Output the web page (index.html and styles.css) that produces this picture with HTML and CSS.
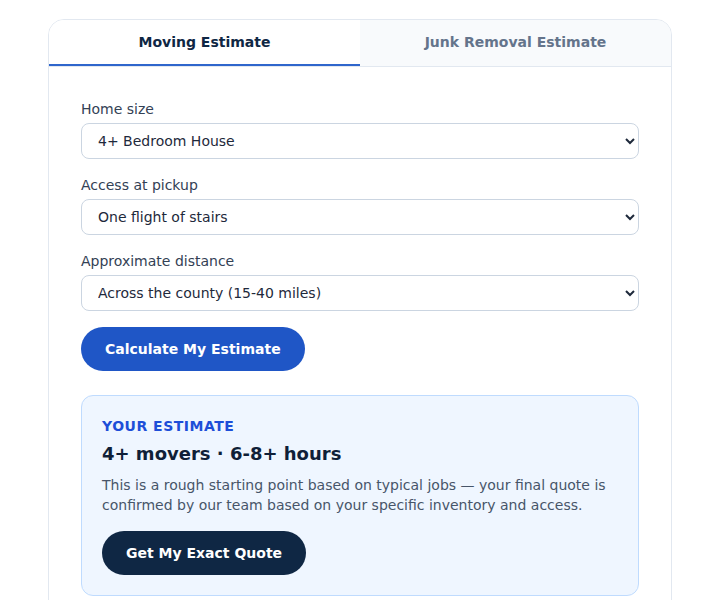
FILE: index.html
```html
<!DOCTYPE html>
<html lang="en">
<head>
<meta charset="utf-8">
<title>Estimate</title>
<link rel="stylesheet" href="styles.css">
</head>
<body>
<div class="card">
  <div class="tabs">
    <div class="tab active">Moving Estimate</div>
    <div class="tab">Junk Removal Estimate</div>
  </div>
  <div class="body">
    <div class="field">
      <label class="label">Home size</label>
      <select class="select"><option>4+ Bedroom House</option></select>
    </div>
    <div class="field">
      <label class="label">Access at pickup</label>
      <select class="select"><option>One flight of stairs</option></select>
    </div>
    <div class="field">
      <label class="label">Approximate distance</label>
      <select class="select"><option>Across the county (15-40 miles)</option></select>
    </div>
    <button class="btn btn-primary">Calculate My Estimate</button>
    <div class="result">
      <div class="eyebrow">YOUR ESTIMATE</div>
      <div class="headline">4+ movers · 6-8+ hours</div>
      <p class="note">This is a rough starting point based on typical jobs — your final quote is confirmed by our team based on your specific inventory and access.</p>
      <button class="btn btn-dark">Get My Exact Quote</button>
    </div>
  </div>
</div>
</body>
</html>
```
FILE: styles.css
```css
html, body {
  margin: 0;
  padding: 0;
  background: #ffffff;
}
body {
  padding: 19px 8px 8px;
  font-family: "DejaVu Sans", sans-serif;
  color: #1e293b;
}
.card {
  max-width: 624px;
  margin: 0 auto;
  border: 1px solid #e2e8f0;
  border-radius: 16px;
  overflow: hidden;
  box-sizing: border-box;
  background: #fff;
}
.tabs {
  display: flex;
  border-bottom: 1px solid #e2e8f0;
}
.tab {
  flex: 1;
  text-align: center;
  font-size: 14px;
  font-weight: bold;
  line-height: 17px;
  padding: 14px 0 13px;
  border-bottom: 2px solid transparent;
  color: #64748b;
  background: #f8fafc;
}
.tab.active {
  color: #0f2744;
  background: #fff;
  border-bottom-color: #2f66cc;
}
.body {
  padding: 32px 32px 32px;
}
.field {
  display: flex;
  flex-direction: column;
  margin-bottom: 16px;
}
.label {
  font-size: 14px;
  line-height: 20px;
  color: #334155;
  margin-bottom: 4px;
  margin-top: 0;
}
.select {
  height: 36px;
  border: 1px solid #cbd5e1;
  border-radius: 8px;
  padding: 0 10px 0 12px;
  font-family: "DejaVu Sans", sans-serif;
  font-size: 14px;
  color: #1e293b;
  background: #fff;
}
.btn {
  display: inline-block;
  border: none;
  border-radius: 999px;
  font-family: "DejaVu Sans", sans-serif;
  font-weight: bold;
  font-size: 14px;
  height: 44px;
  padding: 0 24px;
  color: #fff;
}
.btn-primary {
  background: #1f56c6;
}
.btn-dark {
  background: #0f2744;
}
.result {
  margin-top: 24px;
  background: #eff6ff;
  border: 1px solid #bfdbfe;
  border-radius: 12px;
  padding: 20px 20px 20px;
}
.eyebrow {
  font-size: 14px;
  font-weight: bold;
  letter-spacing: 0.5px;
  color: #1d4ed8;
  line-height: 20px;
}
.headline {
  font-size: 18px;
  font-weight: bold;
  color: #0f1f38;
  line-height: 28px;
  margin-top: 4px;
}
.note {
  font-size: 14px;
  line-height: 20px;
  color: #475569;
  margin: 7px 0 16px;
}
```
